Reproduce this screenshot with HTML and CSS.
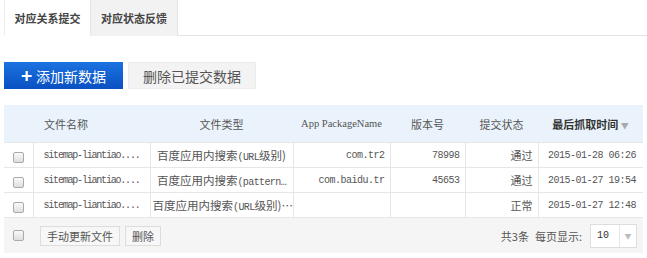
FILE: index.html
```html
<!DOCTYPE html>
<html lang="zh">
<head>
    <meta charset="UTF-8">
    <title>对应关系提交</title>
    <link rel="stylesheet" href="styles.css">
</head>
<body>
    <div class="tabs">
        <div class="tab active">对应关系提交</div>
        <div class="tab">对应状态反馈</div>
    </div>

    <div class="actions">
        <button class="btn-add"><span class="plus">+</span>添加新数据</button>
        <button class="btn-del">删除已提交数据</button>
    </div>

    <table class="data">
        <colgroup>
            <col class="c-chk">
            <col class="c-name">
            <col class="c-type">
            <col class="c-pkg">
            <col class="c-ver">
            <col class="c-state">
            <col class="c-time">
        </colgroup>
        <thead>
            <tr>
                <th></th>
                <th class="name">文件名称</th>
                <th>文件类型</th>
                <th class="en">App PackageName</th>
                <th>版本号</th>
                <th>提交状态</th>
                <th class="sorted">最后抓取时间 <span class="arrow">▼</span></th>
            </tr>
        </thead>
        <tbody>
            <tr>
                <td class="chk-cell"><span class="chk"></span></td>
                <td class="mono file">sitemap-liantiao....</td>
                <td class="type">百度应用内搜索<span class="mono">(URL</span>级别)</td>
                <td class="mono right">com.tr2</td>
                <td class="mono right">78998</td>
                <td class="right">通过</td>
                <td class="mono right">2015-01-28 06:26</td>
            </tr>
            <tr>
                <td class="chk-cell"><span class="chk"></span></td>
                <td class="mono file">sitemap-liantiao....</td>
                <td class="type">百度应用内搜索<span class="mono">(pattern…</span></td>
                <td class="mono right">com.baidu.tr</td>
                <td class="mono right">45653</td>
                <td class="right">通过</td>
                <td class="mono right">2015-01-27 19:54</td>
            </tr>
            <tr>
                <td class="chk-cell"><span class="chk"></span></td>
                <td class="mono file">sitemap-liantiao....</td>
                <td class="type">百度应用内搜索<span class="mono">(URL</span>级别)…</td>
                <td></td>
                <td></td>
                <td class="right">正常</td>
                <td class="mono right">2015-01-27 12:48</td>
            </tr>
        </tbody>
    </table>

    <div class="table-foot">
        <div class="foot-left">
            <span class="chk"></span>
            <button class="btn-small">手动更新文件</button>
            <button class="btn-small">删除</button>
        </div>
        <div class="foot-right">
            <span>共3条</span>
            <span>每页显示:</span>
            <div class="select">
                <span class="val">10</span>
                <span class="drop">▼</span>
            </div>
        </div>
    </div>
</body>
</html>
```

FILE: styles.css
```css
body {
    margin: 0;
    padding: 0 4px;
    background-color: #fff;
    font-family: "Noto Sans CJK SC", "Liberation Sans", sans-serif;
    font-size: 11px;
    color: #555;
}

/* Onglets */
.tabs {
    display: flex;
    height: 35px;
    border-bottom: 1px solid #e3e3e3;
    margin-right: -4px;
}

.tab {
    width: 87px;
    display: flex;
    align-items: center;
    justify-content: center;
    font-weight: bold;
    font-size: 11px;
    color: #444;
    background-color: #f2f2f2;
    border-right: 1px solid #e3e3e3;
    margin-bottom: -1px;
    box-sizing: border-box;
}

.tab.active {
    background-color: #fff;
    border-left: 1px solid #ececec;
    border-bottom: 1px solid #fff;
}

/* Boutons */
.actions {
    display: flex;
    gap: 5px;
    margin-top: 26px;
}

.actions button {
    height: 27px;
    border: none;
    font-family: inherit;
    font-size: 14px;
    padding: 0;
    cursor: pointer;
}

.btn-add {
    width: 119px;
    color: #fff;
    background: linear-gradient(#1b73df, #0a50c2);
    display: flex;
    align-items: center;
    justify-content: center;
    gap: 4px;
}

.btn-add .plus {
    font-size: 19px;
    font-weight: bold;
    line-height: 1;
    margin-top: -2px;
}

.btn-del {
    width: 128px;
    color: #555;
    background-color: #f3f3f3;
    border: 1px solid #ececec !important;
}

/* Tableau */
.data {
    width: 639px;
    margin-top: 16px;
    border-collapse: collapse;
    table-layout: fixed;
}

.c-chk { width: 29px; }
.c-name { width: 117px; }
.c-type { width: 143px; }
.c-pkg { width: 97px; }
.c-ver { width: 75px; }
.c-state { width: 73px; }
.c-time { width: 105px; }

.data th {
    height: 37px;
    background-color: #eaf3fb;
    font-weight: normal;
    color: #555;
    padding: 0;
}

.data th.name {
    text-align: left;
    padding-left: 11px;
}

.data th.en {
    font-family: "Liberation Serif", serif;
    font-size: 10.5px;
}

.data th.sorted {
    font-weight: bold;
    color: #333;
}

.arrow {
    font-size: 8px;
    color: #aaa;
    font-weight: normal;
}

.data td {
    height: 24px;
    border: 1px solid #e6e6e6;
    padding: 0 5px;
    white-space: nowrap;
    overflow: hidden;
    color: #555;
}

.data td.chk-cell {
    border-left: none;
    padding: 0;
    text-align: center;
}

.data td:last-child {
    border-right: none;
    padding-right: 7px;
}

.data td.type {
    text-align: center;
    padding: 0 2px;
    font-size: 11.5px;
}

.mono {
    font-family: "Liberation Mono", monospace;
    font-size: 10px;
    letter-spacing: -0.5px;
}

.data td.file {
    padding-left: 10px;
    letter-spacing: -1.2px;
}

.type .mono {
    font-size: 10px;
    letter-spacing: -0.6px;
}

.right {
    text-align: right;
}

.chk {
    display: inline-block;
    width: 9px;
    height: 9px;
    border: 1px solid #aaa;
    border-radius: 2px;
    background: linear-gradient(#fafafa, #dedede);
    vertical-align: middle;
}

/* Pied du tableau */
.table-foot {
    width: 639px;
    height: 35px;
    background-color: #f5f5f5;
    display: flex;
    align-items: center;
    justify-content: space-between;
    box-sizing: border-box;
    padding: 0 6px 0 9px;
}

.foot-left {
    display: flex;
    align-items: center;
    gap: 5px;
}

.foot-left .chk {
    margin-right: 11px;
}

.btn-small {
    height: 20px;
    padding: 0 6px;
    border: 1px solid #ddd;
    background-color: #f7f7f7;
    font-family: inherit;
    font-size: 11px;
    color: #555;
    cursor: pointer;
}

.foot-right {
    display: flex;
    align-items: center;
    gap: 6px;
    color: #555;
}

.select {
    display: flex;
    width: 45px;
    height: 22px;
    border: 1px solid #ddd;
    background-color: #fff;
    margin-left: 2px;
}

.select .val {
    flex: 1;
    font-family: "Liberation Mono", monospace;
    font-size: 10px;
    line-height: 22px;
    padding-left: 6px;
    color: #333;
}

.select .drop {
    width: 16px;
    border-left: 1px solid #e5e5e5;
    font-size: 7px;
    color: #bbb;
    text-align: center;
    line-height: 22px;
}
```
